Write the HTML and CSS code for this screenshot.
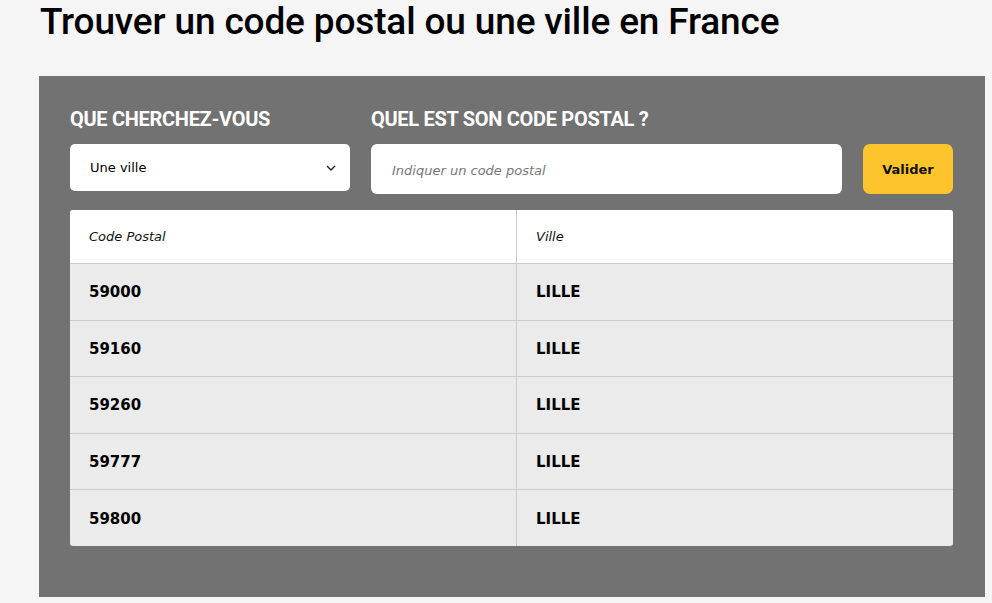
FILE: index.html
```html
<!doctype html>
<html>

<head>
    <meta charset="utf8">
    <title>Trouver un code postal</title>
    <link rel="stylesheet" href="styles.css">
</head>

<body>
    <h1 class="title">Trouver un code postal ou une ville en France</h1>
    <section class="search">
        <form class="search-form">
            <label class="label">QUE CHERCHEZ-VOUS</label>
            <label class="label">QUEL EST SON CODE POSTAL ?</label>
            <span></span>
            <div class="select">
                <span>Une ville</span>
                <svg width="10" height="6" viewBox="0 0 10 6"><path d="M1 1l4 4 4-4" fill="none" stroke="#222" stroke-width="1.4"/></svg>
            </div>
            <input class="field" type="text" placeholder="Indiquer un code postal">
            <a class="submit">Valider</a>
        </form>
        <table class="results">
            <tr class="head"><td>Code Postal</td><td>Ville</td></tr>
            <tr><td>59000</td><td>LILLE</td></tr>
            <tr><td>59160</td><td>LILLE</td></tr>
            <tr><td>59260</td><td>LILLE</td></tr>
            <tr><td>59777</td><td>LILLE</td></tr>
            <tr><td>59800</td><td>LILLE</td></tr>
        </table>
    </section>
</body>

</html>
```

FILE: styles.css
```css
html { background-color: #f5f5f5; }
body {
    margin: 0;
    padding: 0;
    font-family: 'DejaVu Sans', Verdana, sans-serif;
}

.title {
    margin: 0 0 0 40px;
    padding: 0;
    height: 76px;
    line-height: 44px;
    font-family: Roboto, sans-serif;
    font-weight: 500;
    font-size: 37px;
    letter-spacing: -0.15px;
    color: #000;
}

.search {
    margin-left: 39px;
    width: 946px;
    height: 521px;
    box-sizing: border-box;
    padding: 29px 32px 0 31px;
    background-color: #727272;
}

.search-form {
    display: grid;
    grid-template-columns: 280px 471px 90px;
    column-gap: 21px;
    align-items: start;
}

.label {
    font-family: Roboto, sans-serif;
    font-weight: bold;
    font-size: 20px;
    letter-spacing: -0.3px;
    line-height: 28px;
    height: 39px;
    color: #fff;
}

.select {
    height: 47px;
    box-sizing: border-box;
    background: #fff;
    border-radius: 5px;
    display: flex;
    align-items: center;
    justify-content: space-between;
    padding: 0 14px 0 20px;
    font-size: 13px;
    color: #000;
}

.field {
    height: 50px;
    box-sizing: border-box;
    border: none;
    border-radius: 6px;
    padding: 2px 21px 0;
    margin: 0;
    font-family: 'DejaVu Sans', Verdana, sans-serif;
    font-size: 13px;
    outline: none;
}

.field::placeholder {
    color: #777;
    font-style: italic;
}

.submit {
    height: 50px;
    border-radius: 7px;
    background-color: #fdc52b;
    display: flex;
    align-items: center;
    justify-content: center;
    font-size: 13px;
    font-weight: bold;
    color: #111;
}

.results {
    margin-top: 16px;
    width: 883px;
    border-collapse: collapse;
    background-color: #ebebeb;
    border-radius: 3px;
    overflow: hidden;
}

.results td {
    height: 54.6px;
    padding: 1px 19px 0;
    border-top: 1px solid #ccc;
    font-size: 15px;
    font-weight: bold;
    color: #000;
}

.results td:first-child { width: 408px; }

.results td + td { border-left: 1px solid #ccc; }

.results .head td {
    height: 53px;
    padding-top: 0;
    border-top: none;
    background-color: #fff;
    font-size: 13px;
    font-weight: normal;
    font-style: italic;
    color: #111;
}
```
